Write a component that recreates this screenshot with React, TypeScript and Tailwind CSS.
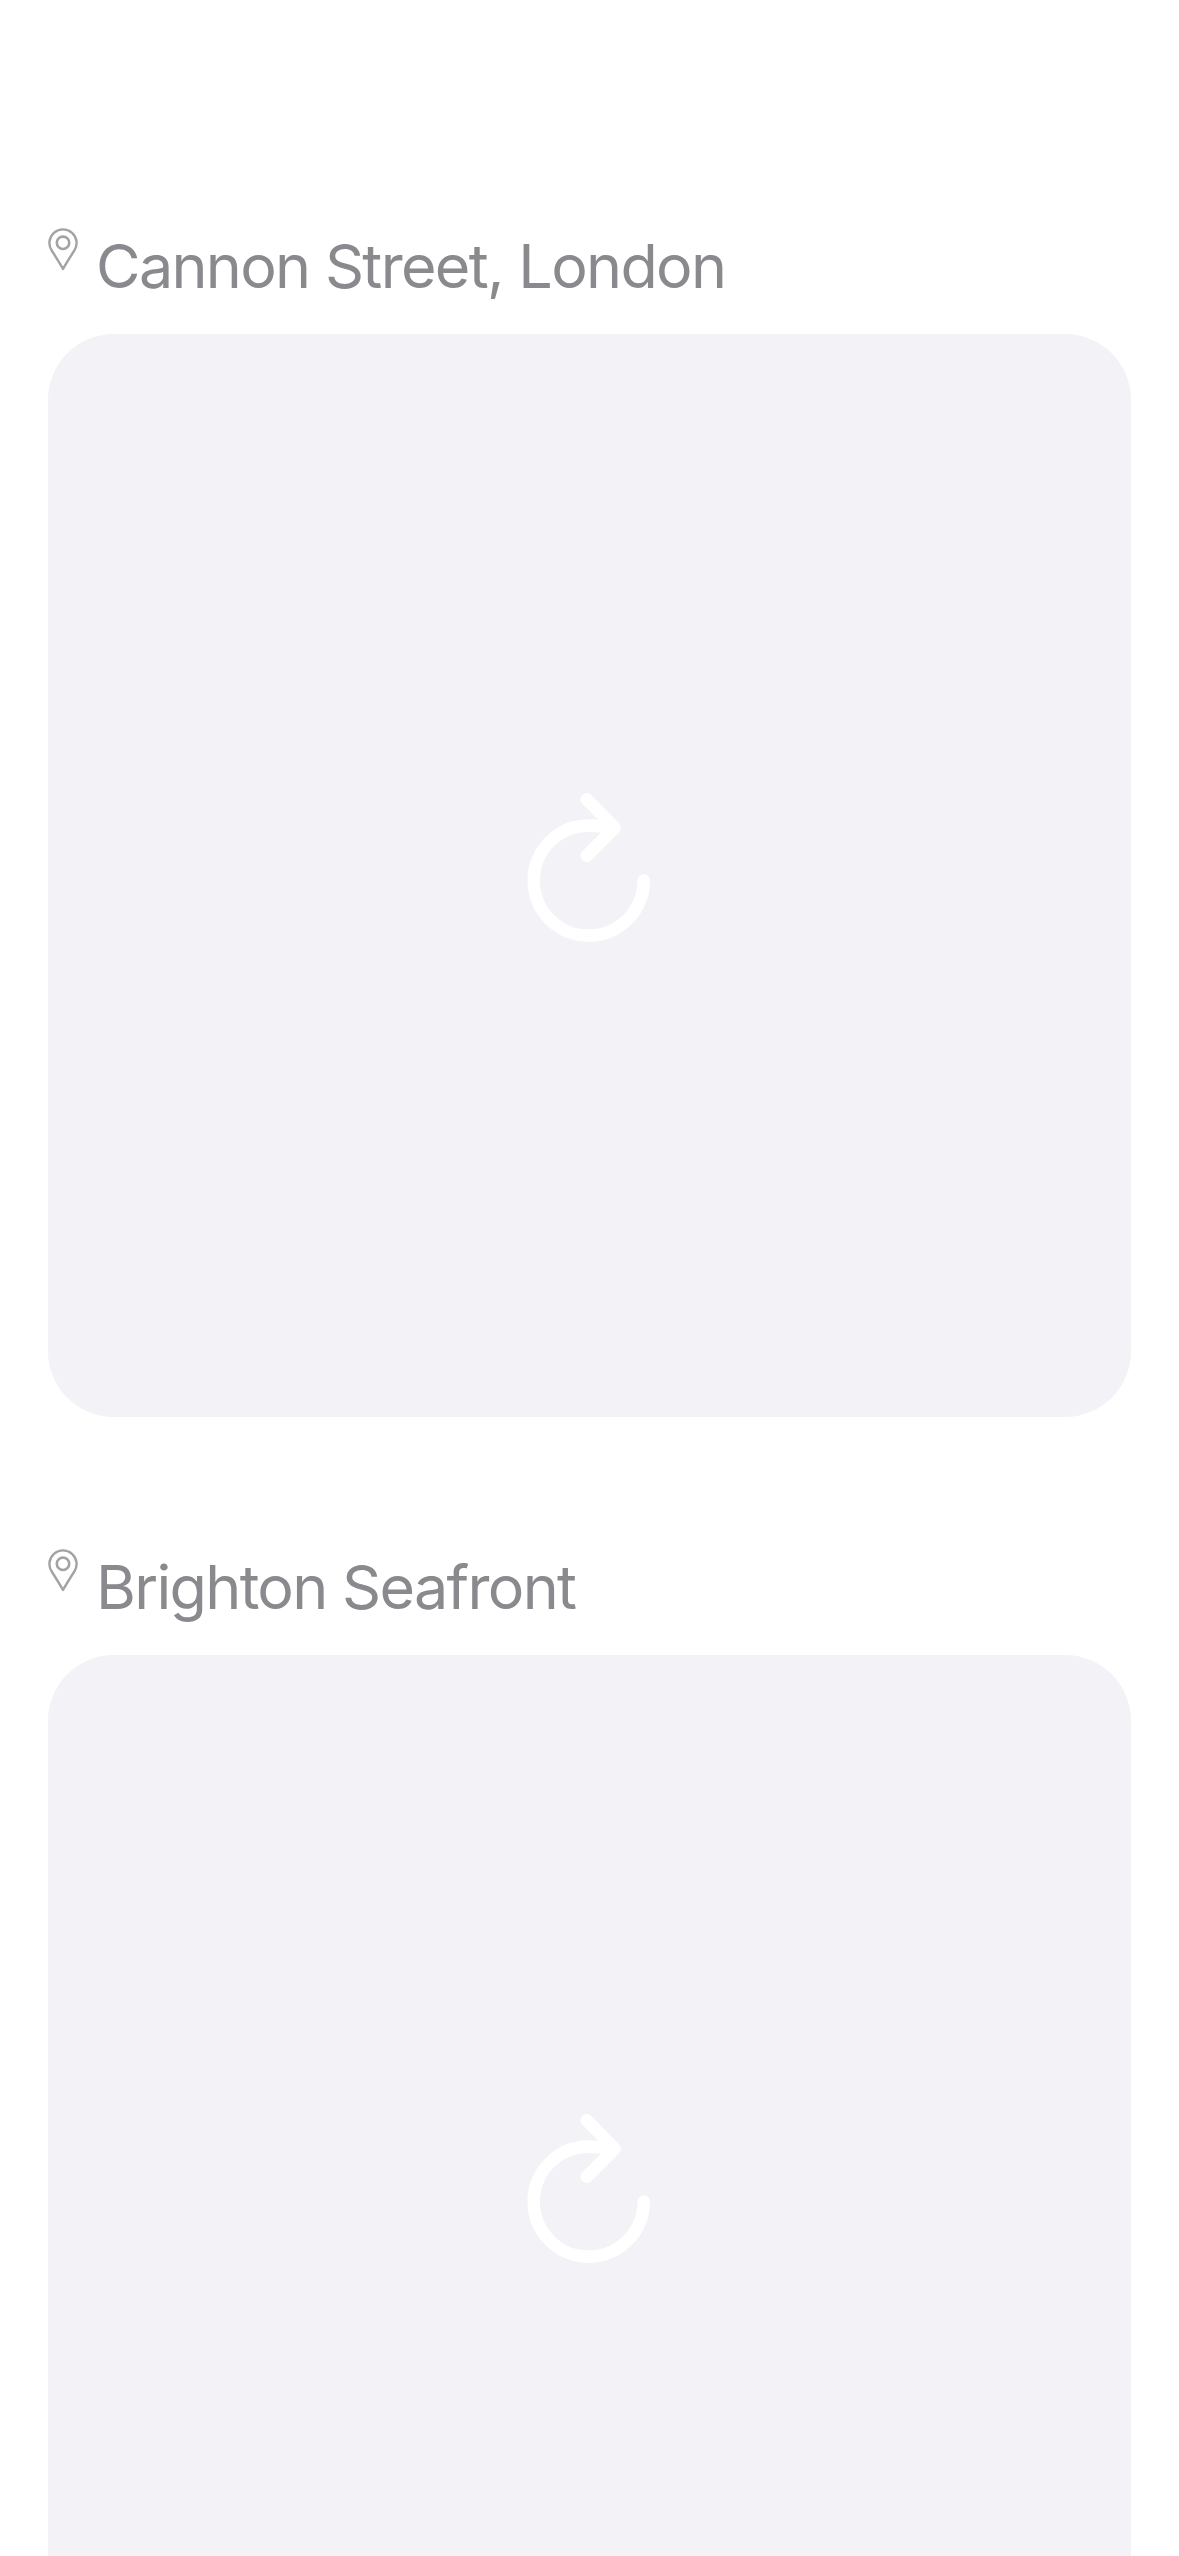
function PinIcon() {
  return (
    <svg className="mt-[11px] h-[44px] w-[30px] shrink-0" viewBox="0 0 30 44" fill="none" stroke="#a3a3a3">
      <path d="M15 41C12 35.5 7.5 28.5 3.8 22.7A13.6 13.6 0 1 1 26.2 22.7C22.5 28.5 18 35.5 15 41Z" strokeWidth="2.4" strokeLinejoin="round" />
      <circle cx="15" cy="14.8" r="6.2" strokeWidth="2.6" />
    </svg>
  );
}

function ReloadIcon() {
  return (
    <svg className="mr-px mb-[15px] h-[150px] w-[124px]" viewBox="0 0 124 150" fill="none" stroke="#ffffff" strokeWidth="12.6" strokeLinecap="round" strokeLinejoin="round">
      <path d="M116.7 87.5A55 55 0 1 1 61.5 32.6Q73 32.5 86.5 34.8" />
      <path d="M59.8 6.4L87.7 34.7L59.8 62.8" />
    </svg>
  );
}

function PlaceCard({ name }: { name: string }) {
  return (
    <section className="flex h-[1321px] shrink-0 flex-col">
      <header className="flex h-[117px] shrink-0 items-start">
        <PinIcon />
        <h2 className="ml-[18px] mt-[11px] whitespace-nowrap text-[61px] leading-[76px] font-normal tracking-[-1.68px]">{name}</h2>
      </header>
      <div className="flex h-[1083px] w-full shrink-0 items-center justify-center rounded-[66px] bg-[#f2f2f7]">
        <ReloadIcon />
      </div>
    </section>
  );
}

export default function App() {
  return (
    <main className="flex h-[2556px] w-[1179px] flex-col overflow-hidden bg-white px-[48px] pt-[217px] font-['Inter',sans-serif] text-[#8a8a8e]">
      <PlaceCard name="Cannon Street, London" />
      <PlaceCard name="Brighton Seafront" />
    </main>
  );
}
